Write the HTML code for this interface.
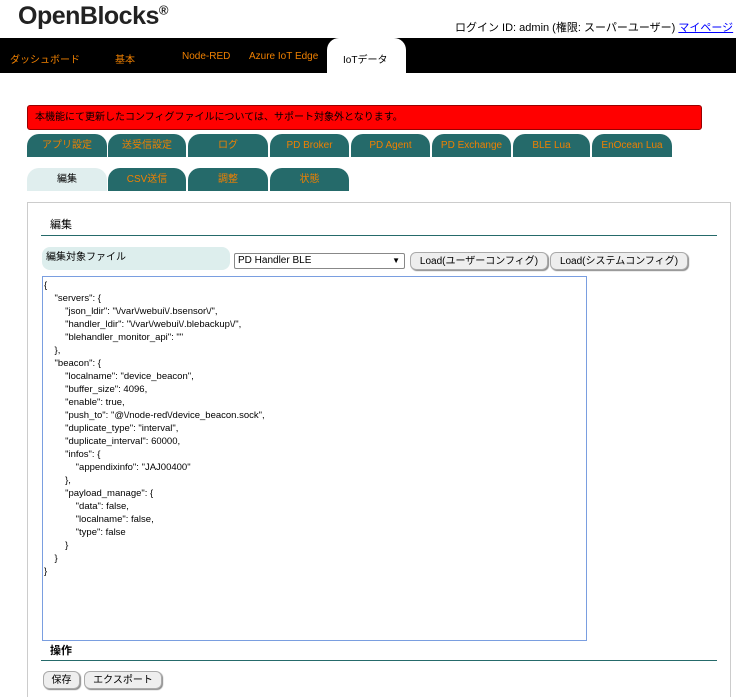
<!DOCTYPE html><html><head><meta charset="utf-8"><style>
html,body{margin:0;width:736px;height:697px;overflow:hidden}
body{position:relative;background:#fff;font-family:"Liberation Sans","Noto Sans CJK JP",sans-serif}
.a{position:absolute}
.nav{top:38px;left:0;width:736px;height:35px;background:#000}
.nv{position:absolute;top:51px;color:#f08000;font-size:10px}
.tab{position:absolute;height:23px;background:#256a6a;color:#f08000;font-size:10px;text-align:center;line-height:24px;border-radius:12px 12px 0 0}
.btn{position:absolute;height:16px;background:#eee;border:1px solid #aaa;border-radius:6px;box-shadow:1px 1px 1px #888;font-size:10px;line-height:17px;text-align:center}
pre{margin:0;font-family:"Liberation Sans",sans-serif;font-size:9.5px;line-height:13px}
</style></head><body>
<div class="a" style="left:18px;top:2px;font-size:25px;font-weight:bold;color:#222;letter-spacing:-0.5px">OpenBlocks<sup style="font-size:13px">®</sup></div>
<div class="a" style="left:455px;top:19px;width:281px;overflow:hidden;font-size:11px;white-space:nowrap">ログイン ID: admin (権限: スーパーユーザー) <u style="color:#00f">マイページ</u> <u style="color:#00f">ログアウト</u></div>
<div class="a nav"></div>
<span class="nv" style="left:10px">ダッシュボード</span>
<span class="nv" style="left:115px">基本</span>
<span class="nv" style="left:182px">Node-RED</span>
<span class="nv" style="left:249px">Azure IoT Edge</span>
<div class="a" style="left:327px;top:38px;width:79px;height:35px;background:#fff;border-radius:12px 12px 0 0"></div>
<span class="a" style="left:343px;top:51px;font-size:10px">IoTデータ</span>
<div class="a" style="left:27px;top:105px;width:673px;height:23px;background:#f00;border:1px solid #900;border-radius:3px;font-size:10px;line-height:24px;text-indent:7px">本機能にて更新したコンフィグファイルについては、サポート対象外となります。</div>
<div class="tab" style="left:27px;top:134px;width:80px">アプリ設定</div>
<div class="tab" style="left:108px;top:134px;width:78px">送受信設定</div>
<div class="tab" style="left:188px;top:134px;width:80px">ログ</div>
<div class="tab" style="left:270px;top:134px;width:79px">PD Broker</div>
<div class="tab" style="left:351px;top:134px;width:79px">PD Agent</div>
<div class="tab" style="left:432px;top:134px;width:79px">PD Exchange</div>
<div class="tab" style="left:513px;top:134px;width:77px">BLE Lua</div>
<div class="tab" style="left:592px;top:134px;width:80px">EnOcean Lua</div>
<div class="tab" style="left:27px;top:168px;width:80px;background:#e0eeee;color:#000">編集</div>
<div class="tab" style="left:108px;top:168px;width:78px">CSV送信</div>
<div class="tab" style="left:188px;top:168px;width:80px">調整</div>
<div class="tab" style="left:270px;top:168px;width:79px">状態</div>
<div class="a" style="left:27px;top:202px;width:702px;height:500px;border:1px solid #ccc"></div>
<div class="a" style="left:50px;top:216px;font-size:11px">編集</div>
<div class="a" style="left:41px;top:235px;width:676px;height:1px;background:#256a6a"></div>
<div class="a" style="left:42px;top:247px;width:188px;height:23px;background:#ddeeed;border-radius:8px;font-size:10px;line-height:22px;text-indent:4px">編集対象ファイル</div>
<div class="a" style="left:234px;top:253px;width:169px;height:14px;border:1px solid #888;border-radius:2px;font-size:10px;line-height:14px;text-indent:3px">PD Handler BLE<span style="position:absolute;right:4px;font-size:8px">▼</span></div>
<div class="btn" style="left:410px;top:252px;width:136px">Load(ユーザーコンフィグ)</div>
<div class="btn" style="left:550px;top:252px;width:136px">Load(システムコンフィグ)</div>
<div class="a" style="left:42px;top:276px;width:543px;height:363px;border:1px solid #7a9ee0"></div>
<pre class="a" style="left:44px;top:279px">{
    "servers": {
        "json_ldir": "\/var\/webui\/.bsensor\/",
        "handler_ldir": "\/var\/webui\/.blebackup\/",
        "blehandler_monitor_api": ""
    },
    "beacon": {
        "localname": "device_beacon",
        "buffer_size": 4096,
        "enable": true,
        "push_to": "@\/node-red\/device_beacon.sock",
        "duplicate_type": "interval",
        "duplicate_interval": 60000,
        "infos": {
            "appendixinfo": "JAJ00400"
        },
        "payload_manage": {
            "data": false,
            "localname": false,
            "type": false
        }
    }
}</pre>
<div class="a" style="left:50px;top:642px;font-size:11px;font-weight:bold">操作</div>
<div class="a" style="left:41px;top:660px;width:676px;height:1px;background:#256a6a"></div>
<div class="btn" style="left:43px;top:671px;width:35px">保存</div>
<div class="btn" style="left:84px;top:671px;width:76px">エクスポート</div>
</body></html>
